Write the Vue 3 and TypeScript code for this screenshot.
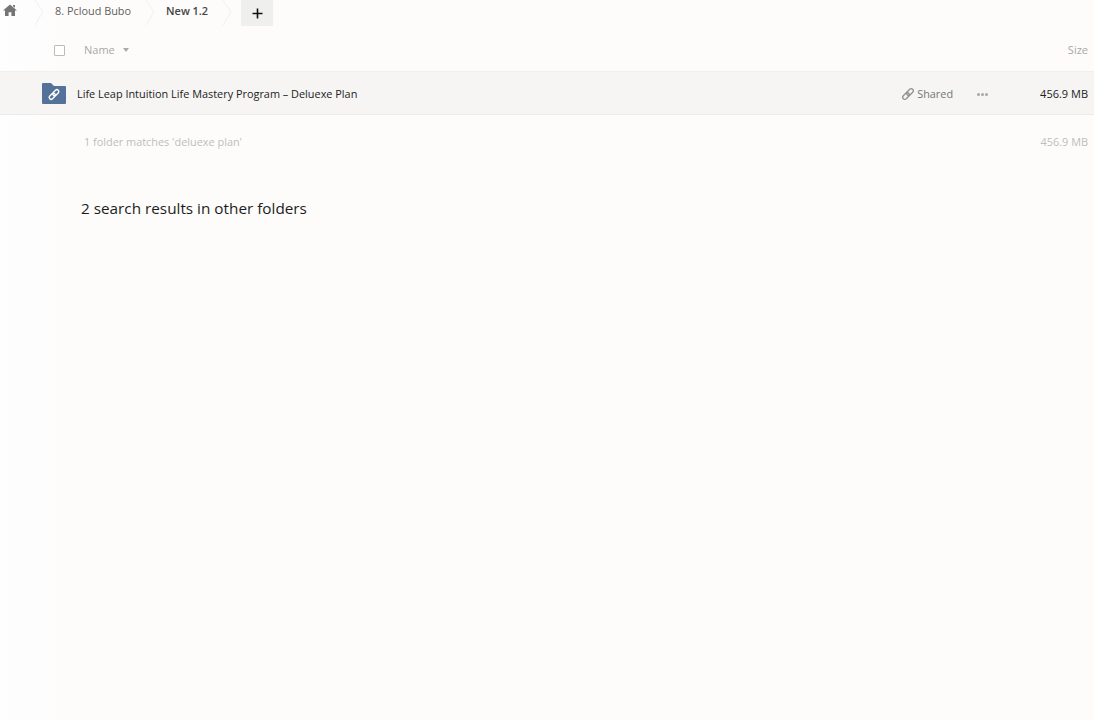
<script setup lang="ts">
const fileName = "Life Leap Intuition Life Mastery Program – Deluexe Plan";
</script>

<template>
  <div class="page">
    <nav class="crumbs">
      <svg class="home" viewBox="0 0 14 12" width="14" height="12">
        <path d="M7 0.5 L14 6.5 H12 V12 H8.4 V8.2 H5.6 V12 H2 V6.5 H0 Z M10 1 H12 V3.8 L10 2.2 Z" fill="#757575" />
      </svg>
      <svg class="chev first" viewBox="0 0 10 26" width="10" height="26"><path d="M1 0 L9 12 L1 25" /></svg>
      <span class="crumb">8. Pcloud Bubo</span>
      <svg class="chev second" viewBox="0 0 10 26" width="10" height="26"><path d="M1 0 L9 12 L1 25" /></svg>
      <span class="crumb current">New 1.2</span>
      <svg class="chev third" viewBox="0 0 10 26" width="10" height="26"><path d="M1 0 L9 12 L1 25" /></svg>
      <button class="add" aria-label="New">
        <svg viewBox="0 0 11 11" width="11" height="11"><path d="M5.5 0.5 V10.5 M0.5 5.5 H10.5" stroke="#111" stroke-width="1.6" fill="none" /></svg>
      </button>
    </nav>

    <header class="head">
      <span class="check"></span>
      <span class="name-col">Name</span>
      <span class="caret"></span>
      <span class="size-col">Size</span>
    </header>

    <div class="row">
      <svg class="folder" viewBox="0 0 24 21" width="24" height="21">
        <path d="M0 1 Q0 0 1 0 H9 L12 3 H23 Q24 3 24 4 V20 Q24 21 23 21 H1 Q0 21 0 20 Z" fill="#54719a" />
        <g fill="none" stroke="#fff" stroke-width="1.4" stroke-linecap="round" transform="rotate(-45 12 11.5)">
          <rect x="6" y="9.6" width="7" height="3.8" rx="1.9" />
          <rect x="11" y="9.6" width="7" height="3.8" rx="1.9" />
        </g>
      </svg>
      <span class="file-name">{{ fileName }}</span>
      <span class="shared">
        <svg viewBox="0 0 14 14" width="14" height="14">
          <g fill="none" stroke="#8f8f8f" stroke-width="1.3" transform="rotate(-45 7 7)">
            <rect x="0.4" y="4.9" width="7.6" height="4.2" rx="2.1" />
            <rect x="6" y="4.9" width="7.6" height="4.2" rx="2.1" />
          </g>
        </svg>
        Shared
      </span>
      <span class="dots"><i></i><i></i><i></i></span>
      <span class="size">456.9 MB</span>
    </div>

    <div class="summary">
      <span>1 folder matches 'deluexe plan'</span>
      <span>456.9 MB</span>
    </div>

    <h2 class="other">2 search results in other folders</h2>
  </div>
</template>

<style>
html,
body {
  margin: 0;
  background: #fdfcfb;
}
</style>

<style scoped>
.page {
  width: 1094px;
  height: 720px;
  overflow: hidden;
  font-family: "Open Sans", sans-serif;
  background: linear-gradient(90deg, #fffeff 0, #fdfcfb 60px);
  color: #222;
}
.crumbs {
  display: flex;
  align-items: flex-start;
  height: 28px;
}
.home {
  margin: 4px 0 0 3px;
}
.chev {
  flex: none;
}
.chev path {
  fill: none;
  stroke: #f1f0ee;
  stroke-width: 1;
}
.chev.first {
  margin-left: 17px;
}
.chev.second {
  margin-left: 14px;
}
.chev.third {
  margin-left: 14px;
}
.crumb {
  font-size: 10.9px;
  line-height: 21px;
  margin-left: 11px;
  color: #5f5f5f;
}
.crumb.current {
  font-weight: 600;
  color: #444;
  margin-left: 11px;
}
.add {
  width: 32px;
  height: 26px;
  margin-left: 9px;
  padding: 0;
  border: 0;
  background: #efefee;
  display: flex;
  align-items: center;
  justify-content: center;
}
.head {
  height: 44px;
  display: flex;
  align-items: center;
  font-size: 11px;
  color: #a8a8a8;
  box-sizing: border-box;
  padding: 0 6px 0 54px;
  border-bottom: 1px solid #f0efed;
}
.check {
  width: 9px;
  height: 9px;
  margin-top: 2px;
  border: 1px solid #bbb;
  border-radius: 1px;
  background: #fff;
}
.name-col {
  margin-left: 19px;
}
.caret {
  margin: 1px 0 0 8px;
  border: 3px solid transparent;
  border-top: 4px solid #aaa;
  border-bottom: 0;
}
.size-col {
  margin-left: auto;
}
.row {
  height: 43px;
  box-sizing: border-box;
  display: flex;
  align-items: center;
  padding: 0 6px 0 42px;
  background: #f6f5f4;
  border-bottom: 1px solid #ecebe9;
  font-size: 10.9px;
}
.folder {
  flex: none;
}
.file-name {
  margin-left: 11px;
  color: #222;
  flex: 1;
}
.shared {
  display: flex;
  align-items: center;
  gap: 2px;
  color: #757575;
}
.shared svg {
  margin-top: 2px;
}
.dots {
  display: flex;
  gap: 1px;
  margin: 2px 0 0 24px;
}
.dots i {
  width: 3px;
  height: 3px;
  border-radius: 50%;
  background: #a8a8a8;
}
.size {
  margin-left: 52px;
  font-size: 11px;
  text-align: right;
  color: #222;
}
.summary {
  display: flex;
  justify-content: space-between;
  padding: 18px 6px 0 84px;
  font-size: 10.9px;
  line-height: 17px;
  color: #bdbdbd;
}
.other {
  margin: 48px 0 0 81px;
  font-size: 15.3px;
  font-weight: 400;
  line-height: 20px;
  color: #1c1c1c;
}
</style>
